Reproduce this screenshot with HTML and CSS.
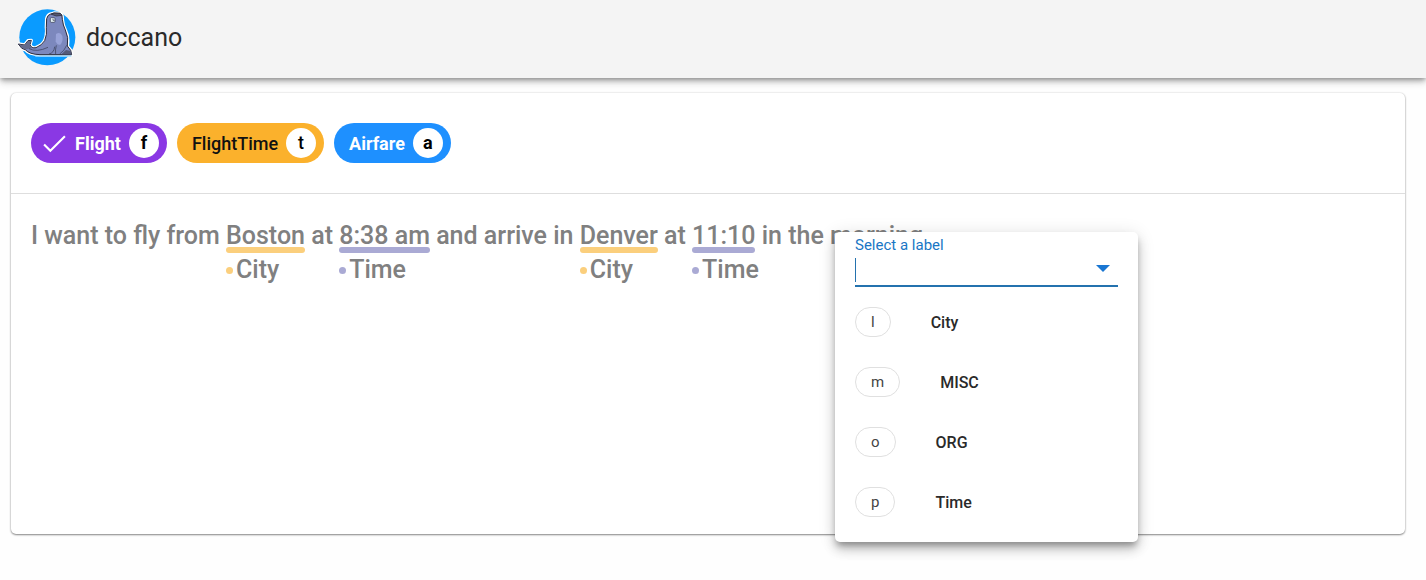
FILE: index.html
```html
<!DOCTYPE html>
<html lang="en">

<head>
    <meta charset="UTF-8">
    <meta name="viewport" content="width=device-width, initial-scale=1.0">
    <title>doccano</title>
    <link rel="stylesheet" href="styles.css">
</head>

<body>
    <!-- Header -->
    <header class="app-bar">
        <svg class="logo" viewBox="24 24 174 174" aria-hidden="true">
            <circle cx="112" cy="112" r="84" fill="#0a9bff" />
            <!-- White outline behind the seal -->
            <path d="M25 132 L44 135 L54 122 L64 121 L60 134 Q64 146 78 143 Q96 136 104 122 Q112 104 109 82 L110 56 Q113 44 122 42 L132 39 L150 40 Q158 44 157 58 Q159 76 166 90 Q177 112 172 138 L182 151 L185 164 L90 164 Q58 163 46 149 Q35 149 25 132 Z" fill="#fff" stroke="#fff" stroke-width="10" stroke-linejoin="round" />
            <path d="M76 168 H184" stroke="#a5dcff" stroke-width="4" />
            <!-- Body -->
            <path d="M25 132 L44 135 L54 122 L64 121 L60 134 Q64 146 78 143 Q96 136 104 122 Q112 104 109 82 L110 56 Q113 44 122 42 L132 39 L150 40 Q158 44 157 58 Q159 76 166 90 Q177 112 172 138 L182 151 L185 164 L90 164 Q58 163 46 149 Q35 149 25 132 Z" fill="#7c88bd" stroke="#2b2c3c" stroke-width="3" stroke-linejoin="round" />
            <path d="M138 102 Q151 94 157 108 Q160 124 151 134 Q142 137 137 124 Z" fill="#98a3d8" />
            <path d="M27 133 L44 136 L54 123 L63 122 L59 134 L66 145 L48 148 Q35 147 27 133 Z" fill="#646b8c" />
            <path d="M57 146 Q80 158 114 142 M117 162 Q132 159 134 140 M137 162 Q135 150 139 136 M170 136 Q163 153 149 162" fill="none" stroke="#343950" stroke-width="2" />
            <path d="M168 150 L182 153 L185 163 H154 Z" fill="#555a78" />
            <path d="M124 43 L132 39 L151 40 L156 46 L139 48 Z" fill="#555970" stroke="#222533" stroke-width="2" />
            <!-- Glasses -->
            <rect x="121" y="53" width="14" height="14" rx="3" fill="#e6f3f5" stroke="#30364a" stroke-width="2" />
            <path d="M129 56 V61 H134" fill="none" stroke="#30364a" stroke-width="2" />
        </svg>
        <h1 class="app-title">doccano</h1>
    </header>

    <main class="content">
        <section class="card">
            <!-- Document labels -->
            <div class="chips">
                <button type="button" class="chip chip-flight" aria-pressed="true">
                    <svg class="check" viewBox="0 0 24 24" aria-hidden="true">
                        <path d="M2 13 L8 19 L22 5" fill="none" stroke="currentColor" stroke-width="2" />
                    </svg>
                    <span>Flight</span>
                    <span class="chip-key">f</span>
                </button>
                <button type="button" class="chip chip-time">
                    <span>FlightTime</span>
                    <span class="chip-key">t</span>
                </button>
                <button type="button" class="chip chip-airfare">
                    <span>Airfare</span>
                    <span class="chip-key">a</span>
                </button>
            </div>

            <!-- Annotated text -->
            <div class="document">
                <p class="sentence">I want to fly from <span class="entity city"><span class="entity-text">Boston</span><span class="entity-label">City</span></span> at <span class="entity time"><span class="entity-text">8:38 am</span><span class="entity-label">Time</span></span> and arrive in <span class="entity city"><span class="entity-text">Denver</span><span class="entity-label">City</span></span> at <span class="entity time"><span class="entity-text">11:10</span><span class="entity-label">Time</span></span> in the morning.</p>

                <!-- Label menu -->
                <div class="menu">
                    <label class="field-label" for="label">Select a label</label>
                    <div class="field">
                        <span class="caret"></span>
                        <input type="text" id="label" class="field-input" autocomplete="off">
                        <svg class="arrow" viewBox="0 0 14 10" aria-hidden="true">
                            <path d="M0 0 H14 L7 7 Z" fill="#1976d2" />
                        </svg>
                    </div>
                    <ul class="options">
                        <li class="option"><span class="option-key">l</span>City</li>
                        <li class="option"><span class="option-key">m</span>MISC</li>
                        <li class="option"><span class="option-key">o</span>ORG</li>
                        <li class="option"><span class="option-key">p</span>Time</li>
                    </ul>
                </div>
            </div>
        </section>
    </main>
</body>

</html>
```
FILE: styles.css
```css
/* Global Styles */
* {
    box-sizing: border-box;
}

body {
    font-family: Roboto, sans-serif;
    margin: 0;
    min-height: 100vh;
    display: flex;
    flex-direction: column;
    background: #fefefe;
    color: #2a2a2a;
}

/* Header */
.app-bar {
    display: flex;
    align-items: center;
    gap: 10px;
    height: 78px;
    padding: 0 18px 4px;
    background: #f4f4f4;
    box-shadow: 0 2px 5px -1px rgba(0, 0, 0, 0.4), 0 5px 6px rgba(0, 0, 0, 0.12), 0 1px 12px rgba(0, 0, 0, 0.1);
}

.logo {
    width: 58px;
    height: 58px;
}

.app-title {
    margin: 0;
    font-size: 25px;
    font-weight: 400;
}

/* Card */
.content {
    flex: 1;
    display: flex;
    padding: 15px 21px 46px 11px;
}

.card {
    flex: 1;
    display: flex;
    flex-direction: column;
    background: #fff;
    border-radius: 5px;
    box-shadow: 0 1px 2px rgba(0, 0, 0, 0.45), 0 0 2px rgba(0, 0, 0, 0.15);
}

/* Chips */
.chips {
    display: flex;
    gap: 10px;
    padding: 30px 20px;
    border-bottom: 1px solid #dedede;
}

.chip {
    display: flex;
    align-items: center;
    gap: 8px;
    height: 40px;
    padding: 0 8px 0 15px;
    border: none;
    border-radius: 20px;
    font-family: inherit;
    font-size: 18px;
    font-weight: 500;
    color: #fff;
    cursor: pointer;
}

.chip-flight {
    padding-left: 11px;
    font-weight: 700;
    background: #8a38e4;
}

.chip-time {
    background: #fbb12c;
    color: #111;
}

.chip-airfare {
    font-weight: 700;
    background: #1e90ff;
}

.check {
    width: 25px;
    height: 25px;
}

.chip-key {
    width: 30px;
    line-height: 30px;
    border-radius: 50%;
    background: #fff;
    color: #000;
    text-align: center;
}

/* Annotated text */
.document {
    flex: 1;
    position: relative;
    padding: 25px 20px;
}

.sentence {
    margin: 0;
    font-size: 25px;
    font-weight: 500;
    line-height: 34px;
    color: #808080;
}

.entity {
    display: inline-flex;
    flex-direction: column;
    vertical-align: top;
}

.entity-text {
    height: 34px;
}

/* Coloured bar under the words */
.entity-text::after {
    content: "";
    display: block;
    height: 6px;
    margin-top: -6px;
    border-radius: 3px;
    background: var(--label);
}

.entity-label {
    display: flex;
    align-items: center;
    gap: 3px;
    width: 0;
}

.entity-label::before {
    content: "";
    flex: none;
    width: 7px;
    height: 7px;
    border-radius: 50%;
    background: var(--label);
}

.city {
    --label: #fbcf7d;
}

.time {
    --label: #aaaad4;
}

/* Label menu */
.menu {
    position: absolute;
    top: 38px;
    left: 824px;
    width: 303px;
    padding: 3px 20px 10px;
    background: #fff;
    border-radius: 5px;
    box-shadow: 0 5px 6px -2px rgba(0, 0, 0, 0.3), 0 8px 12px rgba(0, 0, 0, 0.18), 0 2px 18px rgba(0, 0, 0, 0.12);
}

.field-label {
    display: block;
    font-size: 15px;
    line-height: 20px;
    color: #1976c5;
}

.field {
    display: flex;
    align-items: center;
    height: 32px;
    padding-right: 8px;
    border-bottom: 2px solid #2472ae;
}

.caret {
    width: 1px;
    height: 24px;
    background: #2472ae;
}

.field-input {
    flex: 1;
    min-width: 0;
    padding: 0;
    border: none;
    outline: none;
    background: none;
    font-family: inherit;
    font-size: 20px;
}

.arrow {
    width: 14px;
    height: 10px;
}

.options {
    margin: 0;
    padding: 5px 0 0;
    list-style: none;
}

.option {
    display: flex;
    align-items: center;
    gap: 40px;
    height: 60px;
    font-size: 16px;
    font-weight: 500;
}

.option-key {
    padding: 0 15px;
    border: 1px solid #e0e0e0;
    border-radius: 15px;
    font-size: 15px;
    font-weight: 400;
    line-height: 28px;
    color: #444;
}
```
